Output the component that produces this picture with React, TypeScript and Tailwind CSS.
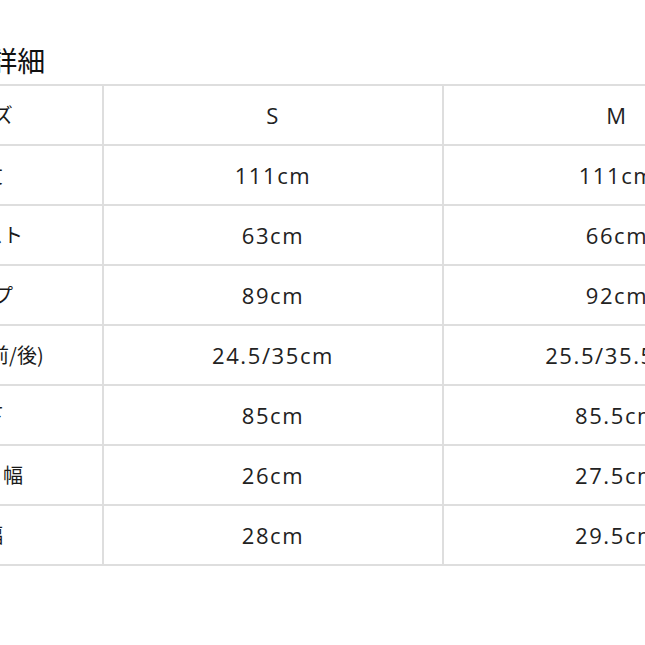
const rows = [
  { label: "サイズ", s: "S", m: "M" },
  { label: "総丈", s: "111cm", m: "111cm" },
  { label: "ウエスト", s: "63cm", m: "66cm" },
  { label: "ヒップ", s: "89cm", m: "92cm" },
  { label: "股上　(前/後)", s: "24.5/35cm", m: "25.5/35.5cm" },
  { label: "股下", s: "85cm", m: "85.5cm" },
  { label: "ワタリ幅", s: "26cm", m: "27.5cm" },
  { label: "裾幅", s: "28cm", m: "29.5cm" },
];

const jp = "font-['Noto_Sans_CJK_JP','Noto_Sans',sans-serif]";
const num = "font-['Open_Sans','Noto_Sans_CJK_JP',sans-serif] text-[22px] tracking-[1.6px] text-[#222]";

export default function App() {
  return (
    <div className="h-[645px] w-[645px] overflow-hidden bg-white">
      <div className="-ml-[136px] w-[926px]">
        <div className="h-[84px] pt-[46px]">
          <h2 className={`${jp} ml-[42px] text-[28px] leading-[28px] font-normal text-[#111]`}>
            サイズ詳細
          </h2>
        </div>
        <div className="border-t-2 border-[#dedede]">
          {rows.map((row) => (
            <div
              key={row.label}
              className="grid h-[60px] grid-cols-[240px_340px_346px] border-b-2 border-[#dedede]"
            >
              <div
                className={`${jp} flex items-center justify-center whitespace-nowrap border-r-2 border-[#dedede] text-[20px] text-[#1a1a1a]`}
              >
                {row.label}
              </div>
              <div className={`${num} flex items-center justify-center border-r-2 border-[#dedede]`}>
                {row.s}
              </div>
              <div className={`${num} flex items-center justify-center whitespace-nowrap`}>
                {row.m}
              </div>
            </div>
          ))}
        </div>
      </div>
    </div>
  );
}
